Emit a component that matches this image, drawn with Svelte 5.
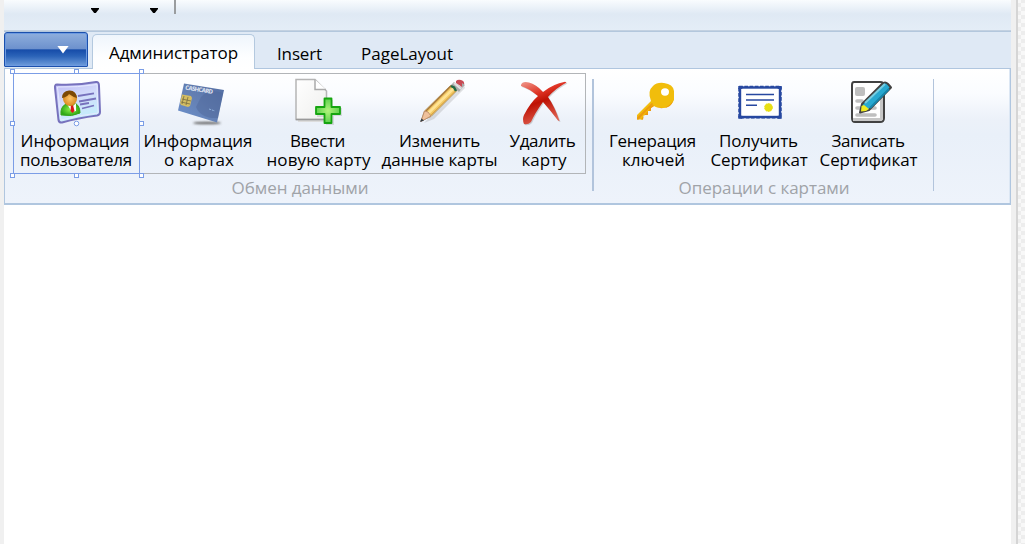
<script>
  const dataCommands = [
    { id: 'user', x: 13, w: 127, lines: ['Информация', 'пользователя'], widths: [109, 112], dx: [-1.5, -0.5] },
    { id: 'card', x: 140, w: 116, lines: ['Информация', 'о картах'], widths: [109, 70], dx: [0, 1] },
    { id: 'add', x: 256, w: 124, lines: ['Ввести', 'новую карту'], widths: [55, 104], dx: [-0.5, 0.5] },
    { id: 'edit', x: 380, w: 119, lines: ['Изменить', 'данные карты'], widths: [81, 116], dx: [0, 0] },
    { id: 'delete', x: 499, w: 86, lines: ['Удалить', 'карту'], widths: [66, 45], dx: [0.5, 2] }
  ];
  const cardCommands = [
    { id: 'key', x: 600, w: 105, lines: ['Генерация', 'ключей'], widths: [87, 63], dx: [0, 1] },
    { id: 'cert', x: 705, w: 108, lines: ['Получить', 'Сертификат'], widths: [79, 97], dx: [-0.5, 0] },
    { id: 'write', x: 813, w: 112, lines: ['Записать', 'Сертификат'], widths: [73, 98], dx: [-1, -0.5] }
  ];

  // Spreads the letters of a caption so that it fills the given width.
  function fit(node, width) {
    const natural = node.getBoundingClientRect().width;
    const count = node.textContent.length;
    const gap = (width - natural) / count;
    node.style.letterSpacing = gap.toFixed(3) + 'px';
  }
</script>

{#snippet icon(c)}
  <svg class="icon" width={c.w} height="54" viewBox="{c.x} 76 {c.w} 54">
    {#if c.id === 'user'}
      <defs>
        <linearGradient id="badge" x1="0" y1="0" x2=".4" y2="1"><stop offset="0" stop-color="#bdb8f5" /><stop offset=".5" stop-color="#d3dcfb" /><stop offset="1" stop-color="#c4eefb" /></linearGradient>
        <radialGradient id="face"><stop offset="0" stop-color="#ffc66c" /><stop offset="1" stop-color="#d98a20" /></radialGradient>
        <radialGradient id="shirt"><stop offset="0" stop-color="#8ef04c" /><stop offset="1" stop-color="#2fa816" /></radialGradient>
      </defs>
      <path d="M57 84.500 Q78 85.500 96 82 Q99 81.500 99 86 L100 112 Q100 115 97 115.500 Q78 118 62 122.500 Q59 123 58.500 120 L55 88 Q54.500 84.500 57 84.500Z" fill="url(#badge)" stroke="#7772bd" stroke-width="2" />
      <path d="M57.500 87 Q78 87.500 97 84.500 L98 113 Q78 115.500 61 120Z" fill="none" stroke="#e6e9ff" stroke-width="1" />
      <path d="M61 115 Q60 107 66 104 L75 103 Q80 106 80 113 Q72 117 62 115Z" fill="url(#shirt)" stroke="#39a31a" />
      <path d="M67 104 L72 107 L76 103 L76 111 L72 112Z" fill="#fff" /><path d="M71 105 l2 0 1.500 6 -2 2 -2 -2Z" fill="#dc1717" />
      <ellipse cx="70" cy="98.500" rx="7" ry="7.500" fill="url(#face)" />
      <path d="M62 98 Q62 91 69 90.500 Q76 90 77 98 Q73 97 69 94 Q67 97 62 98Z" fill="#7d4905" />
      <path d="M78 96 L94 93.300 M79 101.500 L96 98.500 M80 104.500 L89 103 M82 108.500 L94 105.500" stroke="#7772bd" stroke-width="1.800" />
    {:else if c.id === 'card'}
      <defs><linearGradient id="bank" x1="0" y1="1" x2="1" y2="0"><stop stop-color="#6d92cf" /><stop offset=".5" stop-color="#6480b3" /><stop offset="1" stop-color="#526da3" /></linearGradient>
      <filter id="soft" x="-20%" y="-200%" width="140%" height="500%"><feGaussianBlur stdDeviation="1" /></filter></defs>
      <ellipse cx="207" cy="123" rx="14" ry="1.300" fill="#666" filter="url(#soft)" />
      <path d="M184 83.500 L224 90 L217 122.500 L178 110.500Z" fill="url(#bank)" />
      <path d="M201 97 Q209 88 223 93 L218 118 Q201 119 196 107Z" fill="#4d6599" opacity=".45" />
      <path d="M182 94.500 L191 96 L192 98 L190 106 L188 107 L181 105 L180 103Z" fill="#d4bd63" />
      <path d="M184 96 L182 104 M188 97 L186 105 M182 99 L191 101 M181 102 L190 104" stroke="#796f43" stroke-width=".8" />
      <text x="185" y="89.500" transform="rotate(9 185 89.500)" font-size="6" font-weight="bold" textLength="28" fill="#e4eaf5">CASHCARD</text>
      <path d="M209 109 l6 2" stroke="#8eb1dc" stroke-dasharray="2 1" />
    {:else if c.id === 'add'}
      <defs><linearGradient id="paper" x1="0" y1="0" x2="1" y2="1"><stop stop-color="#fff" /><stop offset="1" stop-color="#efefed" /></linearGradient><radialGradient id="plus"><stop stop-color="#b1f47c" /><stop offset="1" stop-color="#5ed04e" /></radialGradient></defs>
      <path d="M298 121 H326" stroke="#ddd" stroke-width="2" />
      <path d="M296 79.500 H315 L326.500 91 V119.500 H296Z" fill="url(#paper)" stroke="#b5b5b5" stroke-width="1.500" />
      <path d="M296 119.500 H326" stroke="#999" stroke-width="1.500" />
      <path d="M315 79.500 V89.500 H326" fill="#fff" stroke="#aaa" stroke-width="1.500" />
      <path d="M325 100 h8 v8 h9 v8 h-8 v9 h-8 v-8 h-9 v-7 h8Z" fill="#888" opacity=".25" />
      <path d="M324.500 98.500 h7 v8.500 h8.500 v7 h-8.500 v9 h-7 v-9 h-8.500 v-7 h8.500Z" fill="url(#plus)" stroke="#16a510" stroke-width="1.800" stroke-linejoin="round" />
    {:else if c.id === 'edit'}
      <path d="M424 123 L434 119 L465 88 L463 83Z" fill="#888" opacity=".25" />
      <path d="M421 121 L424.500 111 L451 85 L457 90.500 L431 116.500Z" fill="#f1c864" stroke="#a58a5b" stroke-width=".8" />
      <path d="M425 112 L451 86" stroke="#a8773b" stroke-width="1.300" /><path d="M428 113.500 L454 88" stroke="#ffe394" stroke-width="2.500" /><path d="M430.500 115.500 L456 90.500" stroke="#dba344" />
      <path d="M421 121.500 L424.500 111 L428 112 L431 116Z" fill="#efc19b" stroke="#b88768" stroke-width=".8" />
      <path d="M420 122 L421.500 118.500 L424 120.500Z" fill="#333c43" />
      <path d="M451 85 L454 82 L462 88 L459 92Z" fill="#aaa" />
      <path d="M451 86 L454 87.500 L456 91" stroke="#226b44" stroke-width="2.500" fill="none" />
      <path d="M454 83 L461 89" stroke="#e1e1e1" stroke-width="2" />
      <path d="M456 81 Q458 79 461 80 Q465 81 464 85 L462 87 L456 83Z" fill="#c84b54" /><path d="M462 83 L462 88 L465 85Z" fill="#aaa" />
    {:else if c.id === 'delete'}
      <defs><linearGradient id="cross" x1="0" y1="0" x2=".4" y2="1"><stop stop-color="#ef9a8e" /><stop offset=".35" stop-color="#df3425" /><stop offset=".55" stop-color="#be1204" /><stop offset="1" stop-color="#de5f4f" /></linearGradient></defs>
      <path d="M521 85 Q522 81 529 82.500 Q536 84 543 92 Q553 84 565 81.800 L566.500 82.500 Q556 88 548 97 Q555 107 559.500 121 L558 120.500 Q550 110 543 102 Q535 113 531 122 Q528 125 524 124 Q522 119 524 115 Q530 103 538 96 Q528 88 521 86Z" fill="#777" opacity=".3" transform="translate(1 1)" />
      <path d="M521 85 Q522 81 529 82.500 Q536 84 543 92 Q553 84 565 81.800 L566.500 82.500 Q556 88 548 97 Q555 107 559.500 121 L558 120.500 Q550 110 543 102 Q535 113 531 122 Q528 125 524 124 Q522 119 524 115 Q530 103 538 96 Q528 88 521 86Z" fill="url(#cross)" />
    {:else if c.id === 'key'}
      <path d="M651 101 Q647 91 653 86 Q657 82 664 83 Q673 84 674 91 V100 Q671 107 664 108 Q657 108 654 106 L651 108 V111 H648 V115 H645 L643 116 V119.500 H637 V115Z" fill="#f1bd0c" />
      <path d="M637 117.500 L652 103 L653 104 L638.500 119.500 H637Z M654 106 L651 108 V111 H648 V115 H644 L643 119.500 H641 L646 113 L649 110 L650 107 L653 105Z" fill="#ec9a10" />
      <path d="M656 107 Q666 111 673 101 Q671 108 663 108Z" fill="#ef980c" />
      <ellipse cx="665" cy="92" rx="4" ry="3.700" fill="#fff" />
    {:else if c.id === 'cert'}
      <rect x="740" y="87.500" width="40" height="29.500" fill="#fff" stroke="#2748a0" stroke-width="2.400" />
      <rect x="739.200" y="86.700" width="41.600" height="31" fill="none" stroke="#2748a0" stroke-width="1.800" stroke-dasharray="3.600 1.600" />
      <path d="M738.300 86 h4 v3 h-4Z M777.700 86 h4 v3 h-4Z M738.300 115.700 h4 v3 h-4Z M777.700 115.700 h4 v3 h-4Z" fill="#2748a0" />
      <path d="M746 94.500 H774 M746 100 H774 M746 105.300 H757" stroke="#2748a0" stroke-width="1.600" />
      <circle cx="768.500" cy="107.500" r="3.900" fill="#e8df13" stroke="#e8df13" stroke-dasharray="1.500 1" />
    {:else}
      <path d="M854 82 H880 Q884 82 884 86 V118 Q884 122 880 122 H855 Q852 122 852 118 V85 Q852 82 854 82Z" fill="#fff" stroke="#414141" stroke-width="2" />
      <path d="M880 84 V118 H853 V121 H880 Q883 121 883 118 V85Z" fill="#c7c7c7" />
      <rect x="855" y="87" width="10" height="9" rx="2" fill="#bfbfbf" />
      <path d="M857 101 H862 M857 108 H875 M857 115 H875" stroke="#bfbfbf" stroke-width="3.600" stroke-linecap="round" />
      <path d="M862 104 L882 84 Q885 81 888 84 L891 87.500 L869 110 L860 112.500Z" fill="#27a8d0" stroke="#414141" stroke-width="2" stroke-linejoin="round" />
      <path d="M865 103 L885 84" stroke="#77cce0" stroke-width="2" /><path d="M870 108 L889 89" stroke="#1686ad" stroke-width="2" />
      <path d="M861.500 106 L864 105 L869 109 L866 111 L861 111.500Z" fill="#f0ea20" />
    {/if}
  </svg>
{/snippet}

{#snippet command(c)}
  <button class="command" style:width="{c.w}px">
    {@render icon(c)}
    <span class="caption">
      {#each c.lines as line, i}
        <span class="line" style:margin-left="{c.dx[i] * 2}px"><span use:fit={c.widths[i]}>{line}</span></span>
      {/each}
    </span>
    {#if c.id === 'user'}
      <svg class="selection" width="134" height="108" viewBox="9 68 134 108">
        <path d="M13.500 70 V176 M139.500 70 V176 M10 73.500 H142 M10 173.500 H142" stroke="#7b9de6" fill="none" />
        {#each [[12, 71], [76.5, 71], [141.5, 71], [12, 123], [141.5, 123], [12, 175], [76.5, 175], [141.5, 175]] as p}
          <rect x={Math.floor(p[0]) - 1.5} y={p[1] - 1.5} width="4" height="4" fill="#fff" stroke="#7b9de6" />
        {/each}
        <circle cx="76.500" cy="123.500" r="2.300" fill="#fff" stroke="#7b9de6" />
      </svg>
    {/if}
  </button>
{/snippet}

<div class="designer">
  <main class="window">
    <div class="quick"><i class="arrow"></i><i class="arrow"></i><i class="divider"></i></div>
    <nav class="tabs">
      <button class="app-menu" aria-label="Menu"><i></i></button>
      <button class="tab active"><span use:fit={129}>Администратор</span></button>
      <button class="tab"><span use:fit={45}>Insert</span></button>
      <button class="tab"><span use:fit={92}>PageLayout</span></button>
    </nav>
    <section class="ribbon">
      <div class="group data">
        <div class="commands boxed">{#each dataCommands as c}{@render command(c)}{/each}</div>
        <div class="group-title"><span use:fit={137}>Обмен данными</span></div>
      </div>
      <div class="group cards">
        <div class="commands">{#each cardCommands as c}{@render command(c)}{/each}</div>
        <div class="group-title"><span use:fit={171}>Операции с картами</span></div>
      </div>
    </section>
  </main>
  <div class="gutter"></div>
  <div class="canvas"></div>
</div>

<style>
  :global(body) { margin: 0; overflow: hidden; }
  .designer { display: flex; width: 1025px; height: 544px; box-sizing: border-box; padding-left: 4px; background: #f0f0f0; font-family: "Open Sans", "Noto Sans", sans-serif; font-size: 17px; color: #000; }
  button { border: 0; padding: 0; margin: 0; background: none; font: inherit; color: inherit; }
  .window { width: 1007px; background: #fff; }
  .quick { display: flex; box-sizing: border-box; height: 32px; background: linear-gradient(#f9fcfe 0, #dfe9f4 14px, #e4edf7 30px); border-bottom: 1px solid #b3c7dd; box-shadow: inset 0 -1px #c3d1e1; }
  .arrow { width: 8px; height: 5px; margin: 8px 0 0 87px; background: #000; clip-path: polygon(0 0, 100% 0, 100% 1px, 60% 100%, 40% 100%, 0 1px); }
  .arrow + .arrow { margin-left: 51px; }
  .divider { width: 2px; height: 14px; margin-left: 16px; background: #9a9d9f; }
  .tabs { display: flex; align-items: flex-start; box-sizing: border-box; height: 36px; background: #dfe9f5; }
  .app-menu { box-sizing: border-box; width: 84px; height: 35px; border: 1px solid #1b50ad; border-radius: 3px 3px 1px 1px; background: linear-gradient(#8fafdd, #6d91cd 48%, #164ca9 51%, #2b63b8 70%, #6f9ddc); box-shadow: inset 0 0 0 1px #6d9ae0; }
  .app-menu i { display: block; width: 12px; height: 8px; margin: 0 0 0 52px; background: #fff; clip-path: polygon(0 0, 100% 0, 50% 100%); }
  .tab { height: 34px; margin-top: 2px; white-space: nowrap; text-align: left; }
  .tab.active { box-sizing: border-box; position: relative; width: 163px; height: 35px; margin-left: 4px; padding-left: 16px; line-height: 36px; border: 1px solid #b4c9df; border-bottom: 0; border-radius: 5px 5px 0 0; background: linear-gradient(#eff5fc, #fdfeff 65%, #fff); }
  .tab.active + .tab { margin-left: 22px; width: 84px; }
  .tab + .tab:not(.active) { line-height: 39px; }
  .ribbon { display: flex; box-sizing: border-box; height: 137px; border: 1px solid #b0c6df; border-bottom-width: 2px; background: linear-gradient(#fff 0, #fafcff 25px, #ecf1f9 50px, #e9f0f9 66px, #eef3fb 134px); box-shadow: inset -1px 0 #dce7f4; }
  .group { box-sizing: border-box; padding-top: 4px; }
  .data { width: 588px; padding-left: 8px; background: linear-gradient(#b2c4dc, #b2c4dc) 100% 10px / 1px 112px no-repeat; }
  .cards { width: 341px; padding-left: 7px; background: linear-gradient(#b2c4dc, #b2c4dc) 0 10px / 1px 112px no-repeat, linear-gradient(#b2c4dc, #b2c4dc) 100% 10px / 1px 112px no-repeat; }
  .commands { display: flex; height: 101px; }
  .boxed { width: 573px; outline: 1px solid #b2b5b8; outline-offset: -1px; }
  .command { position: relative; flex: none; height: 101px; display: flex; flex-direction: column; align-items: center; }
  .icon { display: block; margin-top: 3px; height: 54px; flex: none; }
  .caption { display: block; margin-top: 1px; height: 38px; line-height: 19px; }
  .line { display: flex; justify-content: center; height: 19px; white-space: nowrap; }
  .line span { display: block; height: 19px; }
  .selection { position: absolute; left: -4px; top: -5px; overflow: visible; z-index: 1; }
  .group-title { height: 26px; line-height: 27px; text-align: center; color: #a0a3a8; white-space: nowrap; }
  .data .group-title { padding-right: 6px; }
  .cards .group-title { padding-right: 6px; }
  .gutter { width: 7px; box-sizing: border-box; border-right: 2px solid #d5d5d5; background: #f0f0f0; }
  .canvas { width: 7px; background: repeating-conic-gradient(#ededed 0 25%, #f8f8f8 0 50%) 3px 3px / 8px 8px; }
</style>
